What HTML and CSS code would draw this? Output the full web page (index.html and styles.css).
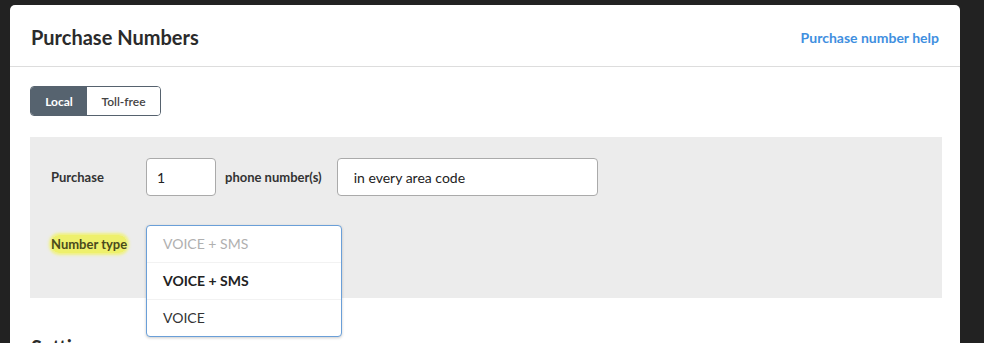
FILE: index.html
```html
<!DOCTYPE html>
<html lang="en">
<head>
    <meta charset="UTF-8">
    <meta name="viewport" content="width=device-width, initial-scale=1.0">
    <title>Purchase Numbers</title>
    <link rel="stylesheet" href="styles.css">
</head>
<body>
    <div class="modal">
        <div class="modal-header">
            <h2>Purchase Numbers</h2>
            <a href="#" class="help-link">Purchase number help</a>
        </div>

        <div class="modal-body">
            <div class="toggle">
                <button class="toggle-btn active">Local</button>
                <button class="toggle-btn">Toll-free</button>
            </div>

            <div class="panel">
                <div class="row">
                    <label class="label">Purchase</label>
                    <input class="input qty" type="text" value="1">
                    <span class="inline-label">phone number(s)</span>
                    <input class="input area" type="text" value="in every area code">
                </div>

                <div class="row type-row">
                    <label class="label"><span class="marker">Number type</span></label>
                    <div class="select-wrap">
                        <div class="dropdown">
                            <div class="option placeholder">VOICE + SMS</div>
                            <div class="option selected">VOICE + SMS</div>
                            <div class="option">VOICE</div>
                        </div>
                    </div>
                </div>
            </div>

            <h3 class="section-title">Settings</h3>
        </div>
    </div>
</body>
</html>
```

FILE: styles.css
```css
body {
    margin: 0;
    padding: 5px 24px 0 10px;
    background-color: #222222;
    font-family: Lato, "Open Sans", sans-serif;
    height: 343px;
    box-sizing: border-box;
    overflow: hidden;
}

.modal {
    background-color: #ffffff;
    width: 950px;
    border-radius: 5px 5px 0 0;
    min-height: 400px;
}

.modal-header {
    display: flex;
    justify-content: space-between;
    align-items: center;
    height: 61px;
    padding: 0 21px;
    border-bottom: 1px solid #dddddd;
}

.modal-header h2 {
    margin: 0;
    font-size: 20px;
    font-weight: 700;
    color: #2b2b2b;
    padding-top: 2px;
}

.help-link {
    color: #3f8fe0;
    font-size: 14px;
    font-weight: 700;
    text-decoration: none;
    padding-top: 3px;
}

.modal-body {
    padding: 19px 18px 0 20px;
}

.toggle {
    display: inline-flex;
    border: 1px solid #56626e;
    border-radius: 4px;
    overflow: hidden;
}

.toggle-btn {
    border: none;
    height: 28px;
    font-family: inherit;
    font-size: 12px;
    font-weight: 700;
    background-color: #ffffff;
    color: #444444;
    padding: 0;
    cursor: pointer;
}

.toggle-btn.active {
    background-color: #56636f;
    color: #ffffff;
    width: 56px;
}

.toggle-btn:not(.active) {
    width: 73px;
    font-weight: 600;
}

.panel {
    margin-top: 21px;
    background-color: #ececec;
    padding: 21px 21px 35px 21px;
}

.row {
    display: flex;
    align-items: center;
}

.label {
    width: 95px;
    font-size: 13px;
    font-weight: 700;
    color: #333333;
}

.input {
    box-sizing: border-box;
    height: 38px;
    border: 1px solid #aaaaaa;
    border-radius: 4px;
    background-color: #ffffff;
    font-family: inherit;
    font-size: 14px;
    color: #222222;
    padding: 0 10px;
}

.qty {
    width: 70px;
}

.inline-label {
    font-size: 13px;
    font-weight: 700;
    color: #333333;
    margin: 0 15px 0 9px;
}

.area {
    width: 261px;
    padding-left: 16px;
}

.type-row {
    margin-top: 29px;
}

.marker {
    background-color: #eef06c;
    color: #4a4a1c;
    border-radius: 8px;
    box-shadow: 0 0 3px 2px #f0f27e;
    padding: 1px 0;
}

.select-wrap {
    position: relative;
    width: 196px;
    height: 38px;
}

.dropdown {
    position: absolute;
    top: 0;
    left: 0;
    width: 196px;
    box-sizing: border-box;
    background-color: #ffffff;
    border: 1px solid #6a9fd8;
    border-radius: 4px;
    box-shadow: 0 1px 3px rgba(0, 0, 0, 0.2);
    z-index: 2;
}

.option {
    height: 36px;
    line-height: 35px;
    padding-left: 16px;
    font-size: 14px;
    color: #333333;
    border-top: 1px solid #f2f2f2;
}

.option.placeholder {
    border-top: none;
    color: #b0b0b0;
    height: 36px;
    line-height: 36px;
}

.option.selected {
    font-weight: 700;
    color: #222222;
}

.section-title {
    margin: 37px 0 0 1px;
    font-size: 20px;
    font-weight: 700;
    color: #2b2b2b;
}
```
